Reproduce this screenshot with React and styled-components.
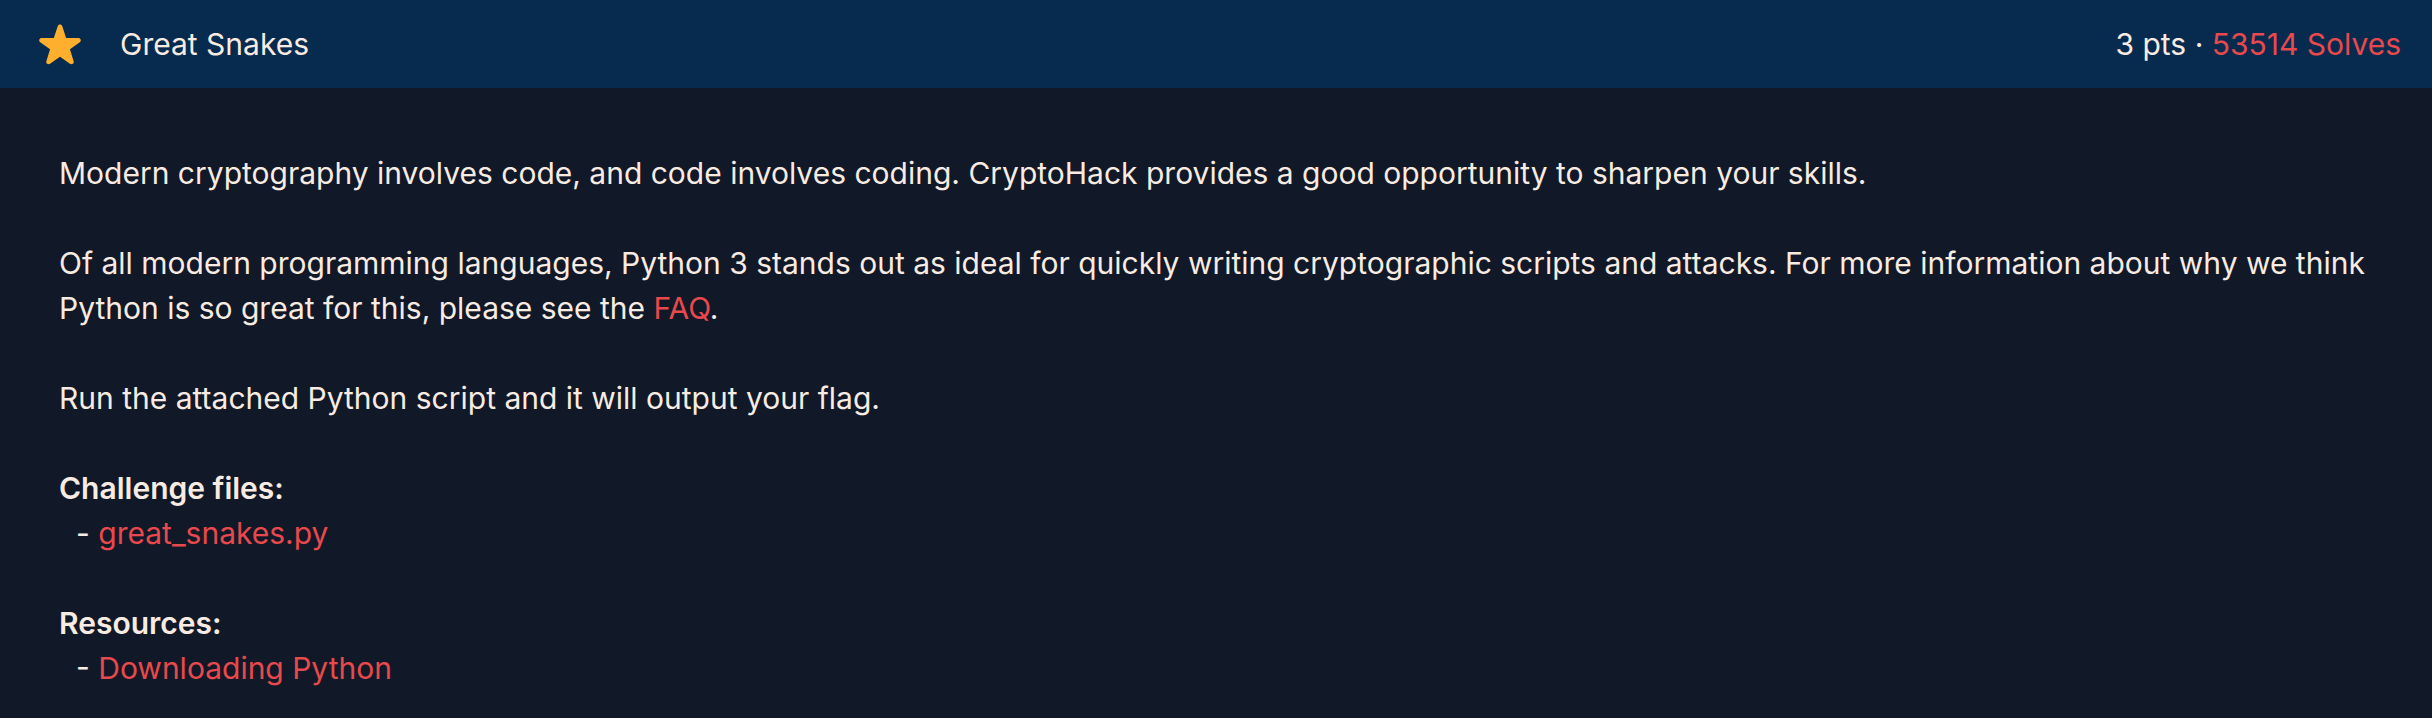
import React from 'react';
import styled, { createGlobalStyle } from 'styled-components';

const GlobalStyle = createGlobalStyle`
  html, body {
    margin: 0;
    padding: 0;
    background: #111827;
  }
  body {
    font-family: Inter, 'Noto Sans', sans-serif;
    color: #f7ebe2;
  }
`;

const Card = styled.div`
  width: 2432px;
  min-height: 718px;
  background: #111827;
`;

const Header = styled.div`
  height: 88px;
  display: flex;
  align-items: center;
  padding: 0 31px 0 38px;
  background: #072a4f;
  font-size: 30px;
`;

const StarIcon = styled.svg`
  width: 44px;
  height: 44px;
  flex: none;
`;

const Title = styled.div`
  margin-left: 38px;
  flex: 1;
`;

const Stats = styled.div`
  white-space: nowrap;
`;

const Red = styled.span`
  color: #e8494c;
`;

const Body = styled.div`
  padding: 63px 59px 0;
  font-size: 30px;
  line-height: 45px;
`;

const Para = styled.p`
  margin: 0 0 45px;

  &:last-child {
    margin-bottom: 0;
  }
`;

const Heading = styled.div`
  font-weight: 600;
`;

const Item = styled.div`
  padding-left: 17px;
`;

const Link = styled.a`
  color: #e8494c;
  text-decoration: none;
`;

function Star() {
  return (
    <StarIcon viewBox="0 0 36 36">
      <path
        fill="#ffaf2e"
        d="M27.287 34.627c-.404 0-.806-.124-1.152-.371L18 28.422l-8.135 5.834c-.693.496-1.623.496-2.312-.008-.689-.499-.979-1.385-.721-2.194l3.034-9.792-8.062-5.681c-.685-.505-.97-1.393-.708-2.203.264-.808 1.016-1.357 1.866-1.363L12.947 13l3.179-9.549c.268-.809 1.023-1.353 1.874-1.353.851 0 1.606.545 1.875 1.353L23 13l10.036.015c.853.006 1.606.556 1.867 1.363.263.81-.022 1.698-.708 2.203l-8.062 5.681 3.034 9.792c.26.809-.033 1.695-.72 2.194-.347.254-.753.379-1.16.379z"
      />
    </StarIcon>
  );
}

export default function App() {
  return (
    <>
      <GlobalStyle />
      <Card>
        <Header>
          <Star />
          <Title>Great Snakes</Title>
          <Stats>
            3 pts · <Red>53514 Solves</Red>
          </Stats>
        </Header>
        <Body>
          <Para>
            Modern cryptography involves code, and code involves coding. CryptoHack provides a good
            opportunity to sharpen your skills.
          </Para>
          <Para>
            Of all modern programming languages, Python 3 stands out as ideal for quickly writing
            cryptographic scripts and attacks. For more information about why we think Python is so
            great for this, please see the <Link href="#">FAQ</Link>.
          </Para>
          <Para>Run the attached Python script and it will output your flag.</Para>
          <Para>
            <Heading>Challenge files:</Heading>
            <Item>
              - <Link href="#">great_snakes.py</Link>
            </Item>
          </Para>
          <Para>
            <Heading>Resources:</Heading>
            <Item>
              - <Link href="#">Downloading Python</Link>
            </Item>
          </Para>
        </Body>
      </Card>
    </>
  );
}
